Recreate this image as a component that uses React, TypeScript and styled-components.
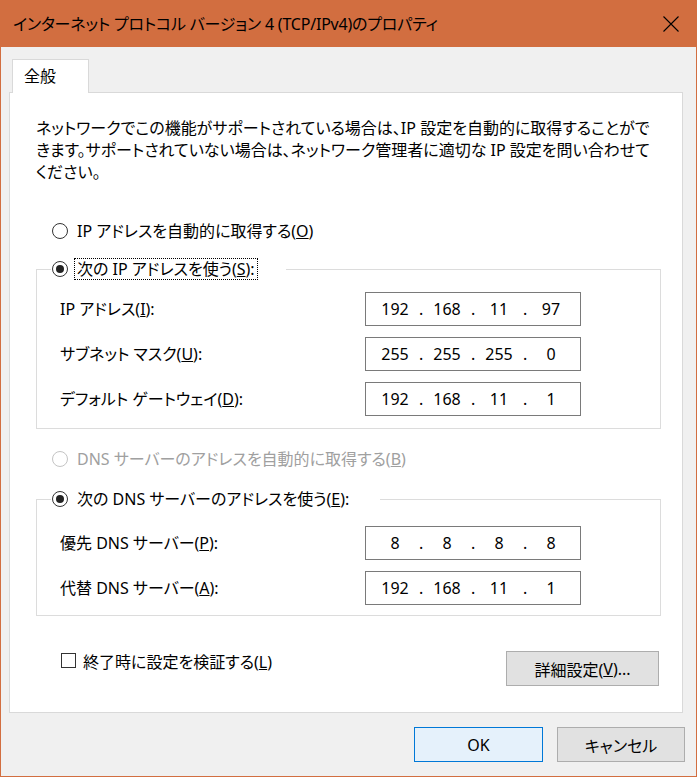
import React from "react";
import styled, { createGlobalStyle } from "styled-components";

const Global = createGlobalStyle`
  html, body { margin: 0; padding: 0; background: #ffffff; }
  body {
    font-family: "Noto Sans", "Noto Sans CJK JP", sans-serif;
    font-size: 16px;
    color: #000;
    font-feature-settings: "palt";
  }
  * { box-sizing: border-box; }
`;

const Window = styled.div`
  width: 697px;
  height: 777px;
  display: flex;
  flex-direction: column;
  background: #f0f0f0;
  border: 1px solid #d26e40;
  border-top: none;
`;

const TitleBar = styled.div`
  height: 47px;
  flex: none;
  display: flex;
  align-items: center;
  background: #d26e40;
  padding-left: 12px;
`;

const Title = styled.div`
  font-size: 16px;
  line-height: 22px;
  letter-spacing: -0.2px;
  white-space: nowrap;
`;

const CloseBox = styled.div`
  margin-left: auto;
  margin-right: 3px;
  width: 44px;
  height: 47px;
  display: flex;
  align-items: center;
  justify-content: center;
`;

const Body = styled.div`
  flex: 1;
  padding: 12px 13px 0 8px;
  display: flex;
  flex-direction: column;
`;

const TabStrip = styled.div`
  display: flex;
  padding-left: 3px;
`;

const Tab = styled.div`
  position: relative;
  z-index: 1;
  width: 77px;
  height: 34px;
  margin-bottom: -1px;
  padding-left: 11px;
  background: #fff;
  border: 1px solid #d9d9d9;
  border-bottom: none;
  line-height: 32px;
  font-size: 16px;
`;

const Panel = styled.div`
  width: 674px;
  height: 621px;
  background: #fff;
  border: 1px solid #d9d9d9;
  padding: 24px 21px 0 26px;
  display: flex;
  flex-direction: column;
`;

const Intro = styled.p`
  margin: 0;
  line-height: 22px;
  font-size: 16px;
  white-space: nowrap;
`;

const OptionRow = styled.div<{ $top?: number }>`
  display: flex;
  align-items: center;
  height: 22px;
  margin-top: ${(p) => p.$top ?? 0}px;
  padding-left: 16px;
`;

const LegendRow = styled.div`
  display: flex;
  align-items: center;
  height: 22px;
  padding-left: 1px;
`;

const RadioCircle = styled.span<{ $checked?: boolean; $disabled?: boolean }>`
  flex: none;
  width: 16px;
  height: 16px;
  border-radius: 50%;
  border: 1px solid ${(p) => (p.$disabled ? "#c4c4c4" : "#333333")};
  background: #fff;
  margin-right: 6px;
  display: flex;
  align-items: center;
  justify-content: center;
  &::after {
    content: "";
    display: ${(p) => (p.$checked ? "block" : "none")};
    width: 8px;
    height: 8px;
    border-radius: 50%;
    background: #222;
  }
`;

const OptionText = styled.span<{ $focused?: boolean; $disabled?: boolean }>`
  padding: 0 2px;
  border: 1px dotted ${(p) => (p.$focused ? "#000" : "transparent")};
  line-height: 20px;
  color: ${(p) => (p.$disabled ? "#a0a0a0" : "#000")};
  white-space: nowrap;
`;

const Group = styled.fieldset<{ $top: number }>`
  margin: ${(p) => p.$top}px 0 0 0;
  padding: 0;
  min-width: 0;
  border: 1px solid #dcdcdc;
`;

const GroupLegend = styled.legend`
  margin-left: 14px;
  padding: 0 28px 0 0;
`;

const GroupBody = styled.div<{ $top: number; $bottom: number }>`
  display: grid;
  row-gap: 11px;
  padding: ${(p) => p.$top}px 0 ${(p) => p.$bottom}px 23px;
`;

const FieldRow = styled.div`
  display: grid;
  grid-template-columns: 305px 216px;
  align-items: center;
`;

const FieldLabel = styled.span`
  white-space: nowrap;
  line-height: 22px;
`;

const IpField = styled.div`
  width: 216px;
  height: 34px;
  border: 1px solid #7a7a7a;
  background: #fff;
  display: grid;
  grid-template-columns: 48px 4px 48px 4px 48px 4px 48px;
  align-items: center;
  padding-left: 5px;
  font-size: 16px;
`;

const Octet = styled.span`
  text-align: center;
`;

const Dot = styled.span`
  text-align: center;
`;

const BottomRow = styled.div`
  margin-top: 35px;
  display: flex;
  justify-content: space-between;
  align-items: flex-start;
`;

const CheckRow = styled.label`
  display: flex;
  align-items: center;
  height: 17px;
  margin-top: 1px;
  padding-left: 25px;
`;

const CheckBox = styled.span`
  width: 15px;
  height: 15px;
  border: 1px solid #333;
  background: #fff;
  margin-right: 7px;
`;

const CheckText = styled.span`
  white-space: nowrap;
`;

const Button = styled.div<{ $width: number; $primary?: boolean }>`
  width: ${(p) => p.$width}px;
  height: 35px;
  display: flex;
  align-items: center;
  justify-content: center;
  background: ${(p) => (p.$primary ? "#e5f1fb" : "#e1e1e1")};
  border: 1px solid ${(p) => (p.$primary ? "#0078d7" : "#adadad")};
  font-size: 16px;
  white-space: nowrap;
`;

const AdvancedWrap = styled.div`
  margin-right: 2px;
`;

const ButtonRow = styled.div`
  margin-top: 14px;
  margin-right: -2px;
  display: flex;
  justify-content: flex-end;
  gap: 14px;
`;

const Ip = ({ parts }: { parts: string[] }) => (
  <IpField>
    {parts.map((p, i) => (
      <React.Fragment key={i}>
        {i > 0 && <Dot>.</Dot>}
        <Octet>{p}</Octet>
      </React.Fragment>
    ))}
  </IpField>
);

export default function App() {
  return (
    <>
      <Global />
      <Window>
        <TitleBar>
          <Title>インターネット プロトコル バージョン 4 (TCP/IPv4)のプロパティ</Title>
          <CloseBox>
            <svg width="16" height="16" viewBox="0 0 16 16">
              <path d="M0.5 0.5 L15.5 15.5 M15.5 0.5 L0.5 15.5" stroke="#000" strokeWidth="1.1" fill="none" />
            </svg>
          </CloseBox>
        </TitleBar>
        <Body>
          <TabStrip>
            <Tab>全般</Tab>
          </TabStrip>
          <Panel>
            <Intro>
              ネットワークでこの機能がサポートされている場合は、IP 設定を自動的に取得することがで
              <br />
              きます。サポートされていない場合は、ネットワーク管理者に適切な IP 設定を問い合わせて
              <br />
              ください。
            </Intro>

            <OptionRow $top={37}>
              <RadioCircle />
              <OptionText>
                IP アドレスを自動的に取得する(<u>O</u>)
              </OptionText>
            </OptionRow>

            <Group $top={16}>
              <GroupLegend>
                <LegendRow>
                  <RadioCircle $checked />
                  <OptionText $focused>
                    次の IP アドレスを使う(<u>S</u>):
                  </OptionText>
                </LegendRow>
              </GroupLegend>
              <GroupBody $top={12} $bottom={12}>
                <FieldRow>
                  <FieldLabel>
                    IP アドレス(<u>I</u>):
                  </FieldLabel>
                  <Ip parts={["192", "168", "11", "97"]} />
                </FieldRow>
                <FieldRow>
                  <FieldLabel>
                    サブネット マスク(<u>U</u>):
                  </FieldLabel>
                  <Ip parts={["255", "255", "255", "0"]} />
                </FieldRow>
                <FieldRow>
                  <FieldLabel>
                    デフォルト ゲートウェイ(<u>D</u>):
                  </FieldLabel>
                  <Ip parts={["192", "168", "11", "1"]} />
                </FieldRow>
              </GroupBody>
            </Group>

            <OptionRow $top={19}>
              <RadioCircle $disabled />
              <OptionText $disabled>
                DNS サーバーのアドレスを自動的に取得する(<u>B</u>)
              </OptionText>
            </OptionRow>

            <Group $top={18}>
              <GroupLegend>
                <LegendRow>
                  <RadioCircle $checked />
                  <OptionText>
                    次の DNS サーバーのアドレスを使う(<u>E</u>):
                  </OptionText>
                </LegendRow>
              </GroupLegend>
              <GroupBody $top={16} $bottom={10}>
                <FieldRow>
                  <FieldLabel>
                    優先 DNS サーバー(<u>P</u>):
                  </FieldLabel>
                  <Ip parts={["8", "8", "8", "8"]} />
                </FieldRow>
                <FieldRow>
                  <FieldLabel>
                    代替 DNS サーバー(<u>A</u>):
                  </FieldLabel>
                  <Ip parts={["192", "168", "11", "1"]} />
                </FieldRow>
              </GroupBody>
            </Group>

            <BottomRow>
              <CheckRow>
                <CheckBox />
                <CheckText>
                  終了時に設定を検証する(<u>L</u>)
                </CheckText>
              </CheckRow>
              <AdvancedWrap>
                <Button $width={153}>
                  詳細設定(<u>V</u>)...
                </Button>
              </AdvancedWrap>
            </BottomRow>
          </Panel>
          <ButtonRow>
            <Button $width={129} $primary>
              OK
            </Button>
            <Button $width={128}>キャンセル</Button>
          </ButtonRow>
        </Body>
      </Window>
    </>
  );
}
